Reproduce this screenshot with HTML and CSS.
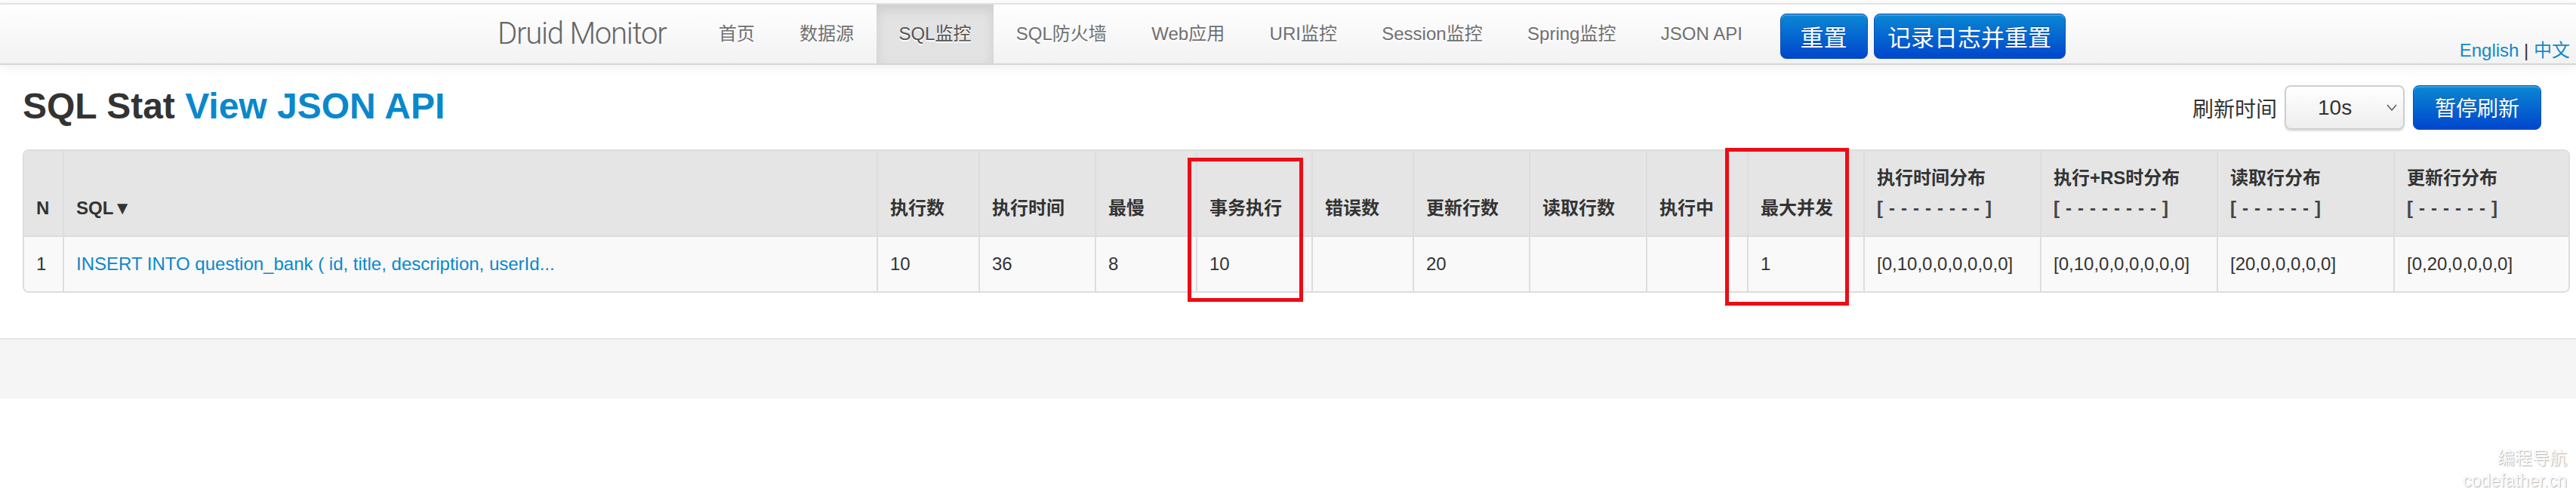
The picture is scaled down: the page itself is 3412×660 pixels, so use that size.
FILE: index.html
```html
<!DOCTYPE html>
<html lang="zh-CN">
<head>
<meta charset="utf-8">
<title>Druid Monitor - SQL Stat</title>
<link rel="stylesheet" href="styles.css">
</head>
<body>
<div class="page">
  <header class="navbar">
    <div class="brand">Druid Monitor</div>
    <nav class="nav">
      <a class="nav-link">首页</a>
      <a class="nav-link">数据源</a>
      <a class="nav-link active">SQL监控</a>
      <a class="nav-link">SQL防火墙</a>
      <a class="nav-link">Web应用</a>
      <a class="nav-link">URI监控</a>
      <a class="nav-link">Session监控</a>
      <a class="nav-link">Spring监控</a>
      <a class="nav-link">JSON API</a>
    </nav>
    <div class="nav-btns">
      <button class="btn btn-nav btn-reset">重置</button>
      <button class="btn btn-nav btn-log">记录日志并重置</button>
    </div>
    <div class="lang"><a class="lang-link">English</a> <span class="lang-sep">|</span> <a class="lang-link">中文</a></div>
  </header>

  <main class="main">
    <div class="title-row">
      <h3 class="title">SQL Stat <a class="title-link">View JSON API</a></h3>
      <div class="refresh">
        <span class="refresh-label">刷新时间</span>
        <div class="select">
          <span class="select-value">10s</span>
          <svg class="chevron" width="14" height="9" viewBox="0 0 14 9"><path d="M1 1 L7 8 L13 1" fill="none" stroke="#555" stroke-width="1.4"/></svg>
        </div>
        <button class="btn btn-refresh">暂停刷新</button>
      </div>
    </div>

    <table class="stat-table">
      <colgroup>
        <col class="w-n"><col class="w-sql"><col class="w-135"><col class="w-154"><col class="w-134"><col class="w-153"><col class="w-134"><col class="w-154"><col class="w-155"><col class="w-134"><col class="w-154"><col class="w-234"><col class="w-234"><col class="w-234"><col class="w-last">
      </colgroup>
      <thead>
        <tr>
          <th>N</th>
          <th>SQL▼</th>
          <th>执行数</th>
          <th>执行时间</th>
          <th>最慢</th>
          <th>事务执行</th>
          <th>错误数</th>
          <th>更新行数</th>
          <th>读取行数</th>
          <th>执行中</th>
          <th>最大并发</th>
          <th>执行时间分布<br><span class="dist">[--------]</span></th>
          <th>执行+RS时分布<br><span class="dist">[--------]</span></th>
          <th>读取行分布<br><span class="dist">[------]</span></th>
          <th>更新行分布<br><span class="dist">[------]</span></th>
        </tr>
      </thead>
      <tbody>
        <tr>
          <td>1</td>
          <td><a class="sql-link">INSERT INTO question_bank ( id, title, description, userId...</a></td>
          <td>10</td>
          <td>36</td>
          <td>8</td>
          <td>10</td>
          <td></td>
          <td>20</td>
          <td></td>
          <td></td>
          <td>1</td>
          <td>[0,10,0,0,0,0,0,0]</td>
          <td>[0,10,0,0,0,0,0,0]</td>
          <td>[20,0,0,0,0,0]</td>
          <td>[0,20,0,0,0,0]</td>
        </tr>
      </tbody>
    </table>
  </main>

  <footer class="footer"></footer>

  <div class="mark mark-tx"></div>
  <div class="mark mark-conc"></div>
  <div class="watermark">编程导航<br>codefather.cn</div>
</div>
</body>
</html>
```

FILE: styles.css
```css
* { box-sizing: border-box; }

html, body {
  margin: 0;
  padding: 0;
  background: #ffffff;
}

body {
  font-family: "Liberation Sans", "Noto Sans CJK SC", sans-serif;
  color: #333333;
  font-size: 24px;
}

.page {
  position: relative;
  width: 3412px;
  height: 660px;
  overflow: hidden;
}

/* ---------- navbar ---------- */
.navbar {
  margin-top: 4px;
  height: 82px;
  display: flex;
  align-items: stretch;
  padding-left: 659px;
  border-top: 2px solid #e2e2e2;
  border-bottom: 2px solid #d6d6d6;
  background: linear-gradient(#ffffff, #f2f2f2);
  box-shadow: 0 3px 14px rgba(0, 0, 0, 0.07);
}

.brand {
  width: 263px;
  flex: none;
  font-family: Roboto, "Liberation Sans", sans-serif;
  font-weight: 300;
  font-size: 40px;
  letter-spacing: -1.2px;
  line-height: 78px;
  color: #666666;
}

.nav {
  display: flex;
}

.nav-link {
  display: block;
  padding: 0 29.7px;
  line-height: 78px;
  font-size: 24px;
  color: #707070;
  text-shadow: 0 2px 0 #ffffff;
  text-decoration: none;
}

.nav-link.active {
  background: #e3e3e3;
  color: #555555;
  box-shadow: inset 0 6px 16px rgba(0, 0, 0, 0.1);
}

.nav-btns {
  display: flex;
  gap: 8px;
  margin-left: 20px;
  margin-top: 12px;
  align-self: flex-start;
}

.btn {
  font-family: "Noto Sans CJK SC", "Liberation Sans", sans-serif;
  color: #ffffff;
  border: 1px solid #0a4fb8;
  border-radius: 8px;
  background: linear-gradient(#0a88d4, #0046cc);
  box-shadow: inset 0 2px 0 rgba(255, 255, 255, 0.2);
  text-shadow: 0 -1px 0 rgba(0, 0, 0, 0.25);
  padding: 0;
  white-space: nowrap;
  text-align: center;
  cursor: pointer;
}

.btn-nav {
  height: 60px;
  font-size: 31px;
  line-height: 58px;
}

.btn-reset { width: 116px; }
.btn-log { width: 254px; }

.lang {
  margin-left: auto;
  align-self: flex-end;
  padding-right: 8px;
  margin-bottom: 2px;
  font-size: 24px;
  line-height: 30px;
  color: #333333;
}

.lang-link {
  color: #1588c9;
}

/* ---------- main ---------- */
.main {
  padding: 27px 7px 0 30px;
}

.title-row {
  display: flex;
  justify-content: space-between;
  align-items: center;
  height: 59px;
  margin-right: 39px;
}

.title {
  margin: 0;
  align-self: flex-start;
  font-size: 48px;
  line-height: 55px;
  font-weight: bold;
  color: #333333;
}

.title-link {
  color: #0a88cc;
  text-decoration: none;
}

.refresh {
  display: flex;
  align-items: center;
}

.refresh-label {
  font-family: "Noto Sans CJK SC", sans-serif;
  font-size: 28px;
  color: #333333;
  margin-right: 10px;
}

.select {
  width: 159px;
  height: 59px;
  display: flex;
  align-items: center;
  padding-left: 42px;
  padding-right: 8px;
  border: 2px solid #cfcfcf;
  border-radius: 8px;
  background: linear-gradient(#ffffff, #ededed);
  box-shadow: 0 2px 2px rgba(0, 0, 0, 0.12);
}

.select-value {
  font-size: 28px;
  color: #333333;
}

.chevron {
  margin-left: auto;
}

.btn-refresh {
  margin-left: 11px;
  width: 170px;
  height: 59px;
  font-size: 28px;
  line-height: 57px;
}

/* ---------- table ---------- */
.stat-table {
  margin-top: 26px;
  width: 3374px;
  table-layout: fixed;
  border-collapse: separate;
  border-spacing: 0;
  border: 2px solid #dddddd;
  border-radius: 8px;
  font-size: 24px;
  line-height: 40px;
}

.w-n { width: 51px; }
.w-sql { width: 1078px; }
.w-134 { width: 134px; }
.w-135 { width: 135px; }
.w-153 { width: 153px; }
.w-154 { width: 154px; }
.w-155 { width: 155px; }
.w-234 { width: 234px; }
.w-last { width: 232px; }

.stat-table th,
.stat-table td {
  padding: 16px 16px;
  text-align: left;
  border-left: 2px solid #dddddd;
  white-space: nowrap;
  overflow: hidden;
}

.stat-table th:first-child,
.stat-table td:first-child {
  border-left: 0;
}

.stat-table th {
  background: #e5e5e5;
  font-weight: bold;
  vertical-align: bottom;
  color: #333333;
}

.stat-table thead th:first-child { border-top-left-radius: 6px; }
.stat-table thead th:last-child { border-top-right-radius: 6px; }
.stat-table tbody td:first-child { border-bottom-left-radius: 6px; }
.stat-table tbody td:last-child { border-bottom-right-radius: 6px; }

.stat-table td {
  background: #f9f9f9;
  border-top: 2px solid #dddddd;
  vertical-align: middle;
}

.dist {
  letter-spacing: 8px;
  color: #444444;
}

.sql-link {
  color: #0a88cc;
  text-decoration: none;
}

/* ---------- footer ---------- */
.footer {
  margin-top: 60px;
  height: 80px;
  border-top: 2px solid #e5e5e5;
  background: #f5f5f5;
}

/* ---------- annotations ---------- */
.mark {
  position: absolute;
  border: 5px solid #ec0c16;
}

.mark-tx {
  left: 1573px;
  top: 209px;
  width: 153px;
  height: 191px;
}

.mark-conc {
  left: 2285px;
  top: 196px;
  width: 164px;
  height: 209px;
}

.watermark {
  position: absolute;
  right: 12px;
  top: 592px;
  text-align: right;
  font-family: "Liberation Sans", "Noto Sans CJK SC", sans-serif;
  font-size: 23px;
  line-height: 30px;
  color: #fbfbfb;
  text-shadow: 1px 1px 1px rgba(0, 0, 0, 0.3), -1px -1px 0 rgba(0, 0, 0, 0.05);
}
```
